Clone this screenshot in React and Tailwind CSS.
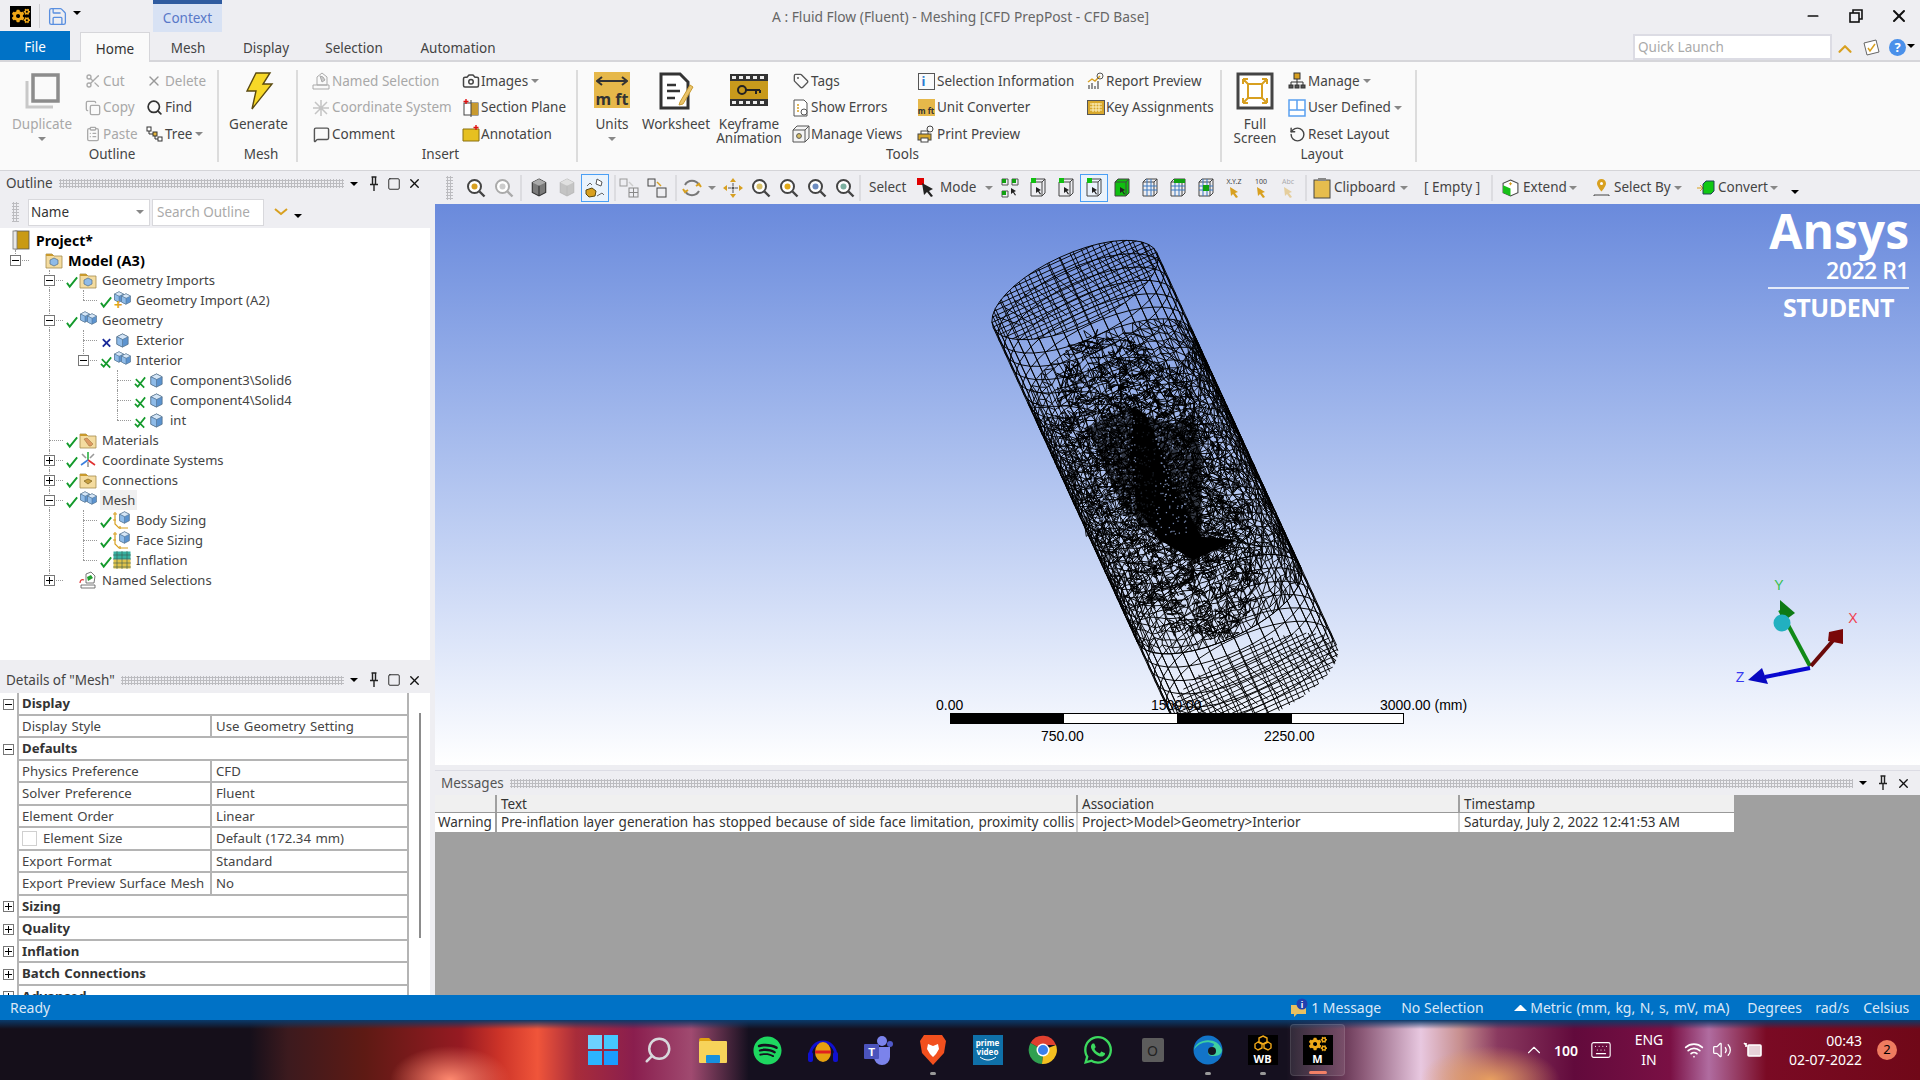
import React from 'react';
import { FaCogs, FaSpotify, FaWhatsapp } from 'react-icons/fa';
import { Scissors, X, Copy, Search, ClipboardList, MessageSquare, Camera, Tag, RotateCw, Volume2, Wifi, ChevronUp, Minus, Square, Keyboard, Save } from 'lucide-react';

/* ---------- mesh drawing ---------- */
function makeRandom(seed) {
  let s = seed;
  return () => {
    s = (s * 1664525 + 1013904223) % 4294967296;
    return s / 4294967296;
  };
}

const AX = 0.416, AY = 0.909, PX = 0.909, PY = -0.416;
const LEN = 432, RAD = 90, MINOR = 36;
function cyl(t, a, r = 1) {
  return [
    1075 - 435 + AX * LEN * t + PX * RAD * r * Math.cos(a) + AX * MINOR * r * Math.sin(a),
    290 - 204 + AY * LEN * t + PY * RAD * r * Math.cos(a) + AY * MINOR * r * Math.sin(a),
  ];
}
const fmt = (p) => `${p[0].toFixed(1)} ${p[1].toFixed(1)}`;

function buildMesh() {
  const rnd = makeRandom(7);
  let d = '';
  const seg = (a, b) => { d += `M${fmt(a)}L${fmt(b)}`; };
  const TWO = Math.PI * 2;

  // coarse ends of the tube
  const N = 40;
  [[0, 0.2], [0.8, 1]].forEach(([a, b]) => {
    for (let t = a; t <= b + 0.001; t += 0.034) {
      for (let i = 0; i < N; i++) seg(cyl(t, (i / N) * TWO), cyl(t, ((i + 1) / N) * TWO));
    }
    for (let i = 0; i < N; i++) seg(cyl(a, (i / N) * TWO), cyl(b, (i / N) * TWO));
  });

  // jittered triangles in the middle of the tube
  const M = 60, K = 34;
  const grid = [];
  for (let j = 0; j <= K; j++) {
    const row = [];
    for (let i = 0; i < M; i++) {
      const t = 0.2 + (0.6 * j) / K + (j > 0 && j < K ? (rnd() - 0.5) * 0.012 : 0);
      row.push(cyl(t, ((i + (rnd() - 0.5) * 0.5) / M) * TWO));
    }
    grid.push(row);
  }
  for (let j = 0; j <= K; j++) {
    for (let i = 0; i < M; i++) {
      seg(grid[j][i], grid[j][(i + 1) % M]);
      if (j < K) {
        seg(grid[j][i], grid[j + 1][i]);
        if (rnd() > 0.35) seg(grid[j][i], grid[j + 1][(i + 1) % M]);
      }
    }
  }

  // end caps
  [0, 1].forEach((t) => {
    for (let u = -0.92; u < 0.95; u += 0.13) {
      const w = Math.sqrt(1 - u * u);
      const c = (x, y) => [
        cyl(t, 0)[0] - PX * RAD + PX * RAD * x + AX * MINOR * y,
        cyl(t, 0)[1] - PY * RAD + PY * RAD * x + AY * MINOR * y,
      ];
      seg(c(u, -w), c(u, w));
      seg(c(-w, u), c(w, u));
      seg(c(u, -w * 0.6), c(Math.min(u + 0.2, Math.sqrt(1 - 0.36 * w * w)), w * 0.6));
    }
  });

  // refinement around the body in the middle, thinning out towards the tube wall
  for (let n = 0; n < 1800; n++) {
    const a = rnd() * TWO;
    const r = rnd();
    const cx = 722 + AX * 165 * r * Math.sin(a) + PX * 78 * r * Math.cos(a);
    const cy = 283 + AY * 165 * r * Math.sin(a) + PY * 78 * r * Math.cos(a);
    const size = 3 + r * 7;
    const p1 = [cx, cy];
    const p2 = [cx + (rnd() - 0.5) * size * 2, cy + (rnd() - 0.5) * size * 2];
    const p3 = [cx + (rnd() - 0.5) * size * 2, cy + (rnd() - 0.5) * size * 2];
    seg(p1, p2); seg(p2, p3); seg(p3, p1);
  }
  return d;
}

const BODY = [[380, 620], [520, 555], [560, 590], [640, 610], [700, 590], [725, 700], [725, 950], [830, 960], [700, 1020], [600, 960], [480, 850], [420, 720]]
  .map(([x, y]) => [960 + x / 3 - 435, 220 + y / 3 - 204]);
const CORE = [[520, 555], [560, 590], [610, 700], [640, 800], [725, 950], [830, 960], [700, 1020], [600, 960], [530, 860], [510, 700]]
  .map(([x, y]) => [960 + x / 3 - 435, 220 + y / 3 - 204]);

function makeSpecks() {
  const rnd = makeRandom(21);
  const out = [];
  for (let i = 0; i < 520; i++) {
    const x = 655 + rnd() * 100;
    const y = 200 + rnd() * 130;
    out.push([x, y]);
  }
  return out;
}

const MESH_PATH = buildMesh();
const SPECKS = makeSpecks();

function MeshDrawing() {
  return (
    <svg className="absolute inset-0" width="1485" height="561" viewBox="0 0 1485 561">
      <clipPath id="meshClip"><rect x="0" y="0" width="1485" height="509" /></clipPath>
      <g clipPath="url(#meshClip)">
        <path d={MESH_PATH} fill="none" stroke="#000" strokeWidth="0.95" />
        <polygon points={BODY.map((p) => p.join(',')).join(' ')} fill="#000" opacity="0.72" />
        <polygon points={CORE.map((p) => p.join(',')).join(' ')} fill="#000" />
        {SPECKS.map(([x, y], i) => (
          <rect key={i} x={x} y={y} width="1.3" height="1.3" fill="#9db3e4" opacity={x > 700 && x < 720 ? 0.15 : 0.75} />
        ))}
      </g>
    </svg>
  );
}

/* ---------- small bits ---------- */
function Caret({ dark }) {
  return <span className={`inline-block w-0 h-0 border-x-[4px] border-x-transparent border-t-[4px] ${dark ? 'border-t-black' : 'border-t-[#888]'}`} />;
}

function Grip({ className }) {
  return <div className={`h-[9px] bg-[radial-gradient(#bcbcc0_1px,transparent_1.1px)] bg-[length:3px_3px] ${className}`} />;
}

function Pin() {
  return (
    <svg width="10" height="16" viewBox="0 0 10 16" fill="none" stroke="#222" strokeWidth="1.4">
      <path d="M2.5 1h5M3.5 1v7M6.5 1v7M1 8.5h8M5 8.5V15" />
    </svg>
  );
}

function PanelButtons({ square = true }) {
  return (
    <div className="flex items-center">
      <span className="w-[20px] flex justify-center"><Caret dark /></span>
      <span className="w-[20px] flex justify-center"><Pin /></span>
      {square && <span className="w-[20px] flex justify-center"><Square size={14} color="#222" strokeWidth={1.6} /></span>}
      <span className="w-[20px] flex justify-center"><X size={15} color="#111" strokeWidth={2.2} /></span>
    </div>
  );
}

function ExpandBox({ open }) {
  return (
    <span className="relative z-10 w-[11px] h-[11px] border border-[#777] bg-white flex items-center justify-center shrink-0">
      <span className="absolute w-[7px] h-px bg-black" />
      {!open && <span className="absolute h-[7px] w-px bg-black" />}
    </span>
  );
}

/* ---------- tree icons ---------- */
function Cube({ size = 18, top = '#d5e6f7', left = '#8fbbe8', right = '#5c93cf' }) {
  return (
    <svg width={size} height={size} viewBox="0 0 16 16">
      <path d="M8 1l6 3v8l-6 3-6-3V4z" fill={right} stroke="#4f6b86" strokeWidth="0.8" />
      <path d="M8 1l6 3-6 3-6-3z" fill={top} stroke="#4f6b86" strokeWidth="0.6" />
      <path d="M2 4l6 3v8l-6-3z" fill={left} stroke="#4f6b86" strokeWidth="0.6" />
    </svg>
  );
}

function Cubes({ plus }) {
  return (
    <span className="relative w-[18px] h-[18px] block">
      <span className="absolute left-0 top-0"><Cube size={12} /></span>
      <span className="absolute left-[7px] top-[2px]"><Cube size={12} /></span>
      {plus && <span className="absolute left-[1px] top-[8px] text-[#e2a51c] font-bold text-[15px] leading-[10px]">+</span>}
    </span>
  );
}

function Folder({ kind }) {
  return (
    <svg width="18" height="18" viewBox="0 0 18 18">
      <path d="M1 3h6l2 2h8v12H1z" fill="#f4dca0" stroke="#a58a4c" strokeWidth="0.8" />
      <path d="M1 3h6l2 2H1z" fill="#c99a2e" />
      {kind === 'cube' && <path d="M9 7l4 2v4l-4 2-4-2V9z" fill="#8fbbe8" stroke="#4f6b86" strokeWidth="0.7" />}
      {kind === 'mat' && <path d="M5 8l3-1 6 6-2 2h-2z" fill="#dc9a63" stroke="#9a6a3a" strokeWidth="0.5" />}
      {kind === 'con' && <path d="M5 10l4-2 4 2-4 3z" fill="#c8a040" stroke="#7a6020" strokeWidth="0.7" />}
    </svg>
  );
}

function ModelBook() {
  return (
    <svg width="18" height="20" viewBox="0 0 18 20">
      <rect x="3" y="1" width="14" height="18" fill="#c99a14" stroke="#555" strokeWidth="0.8" />
      <rect x="1" y="1" width="4" height="18" fill="#e8e8e8" stroke="#777" strokeWidth="0.8" />
    </svg>
  );
}

function CoordIcon() {
  return (
    <svg width="18" height="18" viewBox="0 0 18 18" strokeWidth="1.6" fill="none">
      <path d="M9 9V1" stroke="#28b040" />
      <path d="M9 9l7 5" stroke="#e03030" />
      <path d="M9 9l-7 5" stroke="#3a80e0" />
      <path d="M3 3l4 4M15 3l-4 4M9 11v5" stroke="#999" />
    </svg>
  );
}

function NamedIcon() {
  return (
    <svg width="18" height="18" viewBox="0 0 18 18">
      <path d="M2 14h14v3H2z" fill="#fff" stroke="#555" strokeWidth="0.8" />
      <path d="M7 3l5-2 4 4-1 7H7z" fill="#fff" stroke="#555" strokeWidth="0.8" />
      <path d="M8 6l4-2 2 3-5 3z" fill="#22a030" />
      <path d="M1 12c0-3 2-4 4-3" fill="none" stroke="#e03030" strokeWidth="1.2" />
    </svg>
  );
}

function SizingIcon() {
  return (
    <span className="relative w-[18px] h-[18px] block">
      <svg className="absolute" width="18" height="18" viewBox="0 0 18 18" fill="none" stroke="#d8a020" strokeWidth="1.2">
        <path d="M2 1v12l4 4h9" />
        <path d="M0 3h4M0 9h3M7 15v3" />
      </svg>
      <span className="absolute left-[5px] top-0"><Cube size={13} /></span>
    </span>
  );
}

function InflationIcon() {
  return (
    <svg width="18" height="18" viewBox="0 0 18 18">
      <rect x="0.5" y="0.5" width="17" height="8" fill="#38b0a0" />
      <rect x="0.5" y="8.5" width="17" height="9" fill="#dfc24a" />
      <path d="M0 4h18M0 8h18M0 12h18M0 16h18M4 0v18M9 0v18M14 0v18" stroke="#3a5a50" strokeWidth="0.6" />
    </svg>
  );
}

function CheckMark({ kind }) {
  if (!kind) return null;
  return (
    <svg width="14" height="14" viewBox="0 0 14 14" fill="none">
      {kind === 'ok' && <path d="M1 8l3 4 8-10" stroke="#149a2c" strokeWidth="2" />}
      {kind === 'okx' && <path d="M2 4l9 9M1 9l3 3 8-10" stroke="#149a2c" strokeWidth="1.8" />}
      {kind === 'x' && <path d="M3 4l8 8M11 4l-8 8" stroke="#1a2a9a" strokeWidth="2" />}
    </svg>
  );
}

const LEVELS = ['pl-[10px]', 'pl-[44px]', 'pl-[78px]', 'pl-[112px]'];
const GUIDES = { 49: 'left-[49px]', 83: 'left-[83px]', 117: 'left-[117px]', 15: 'left-[15px]' };

const TREE = [
  { label: 'Geometry Imports', level: 1, box: 'open', check: 'ok', icon: <Folder kind="cube" />, guides: [[49, 1]] },
  { label: 'Geometry Import (A2)', level: 2, check: 'ok', icon: <Cubes plus />, guides: [[49, 1], [83, 0]] },
  { label: 'Geometry', level: 1, box: 'open', check: 'ok', icon: <Cubes />, guides: [[49, 1]] },
  { label: 'Exterior', level: 2, check: 'x', icon: <Cube size={15} />, guides: [[49, 1], [83, 1]] },
  { label: 'Interior', level: 2, box: 'open', check: 'okx', icon: <Cubes />, guides: [[49, 1], [83, 0]] },
  { label: 'Component3\\Solid6', level: 3, check: 'okx', icon: <Cube size={15} />, guides: [[49, 1], [117, 1]] },
  { label: 'Component4\\Solid4', level: 3, check: 'okx', icon: <Cube size={15} />, guides: [[49, 1], [117, 1]] },
  { label: 'int', level: 3, check: 'okx', icon: <Cube size={15} />, guides: [[49, 1], [117, 0]] },
  { label: 'Materials', level: 1, check: 'ok', icon: <Folder kind="mat" />, guides: [[49, 1]] },
  { label: 'Coordinate Systems', level: 1, box: 'closed', check: 'ok', icon: <CoordIcon />, guides: [[49, 1]] },
  { label: 'Connections', level: 1, box: 'closed', check: 'ok', icon: <Folder kind="con" />, guides: [[49, 1]] },
  { label: 'Mesh', level: 1, box: 'open', check: 'ok', icon: <Cubes />, guides: [[49, 1]], active: true },
  { label: 'Body Sizing', level: 2, check: 'ok', icon: <SizingIcon />, guides: [[49, 1], [83, 1]] },
  { label: 'Face Sizing', level: 2, check: 'ok', icon: <SizingIcon />, guides: [[49, 1], [83, 1]] },
  { label: 'Inflation', level: 2, check: 'ok', icon: <InflationIcon />, guides: [[49, 1], [83, 0]] },
  { label: 'Named Selections', level: 1, box: 'closed', icon: <NamedIcon />, guides: [[49, 0]] },
];

function TreeRow({ row }) {
  return (
    <div className={`relative h-5 flex items-center ${LEVELS[row.level]}`}>
      {row.guides?.map(([x, full]) => (
        <span key={x} className={`absolute top-0 border-l border-dotted border-[#999] ${GUIDES[x]} ${full ? 'bottom-0' : 'h-[10px]'}`} />
      ))}
      <div className="relative w-[22px] h-full flex items-center shrink-0">
        <span className="absolute left-[5px] right-[3px] border-t border-dotted border-[#999]" />
        {row.box ? <ExpandBox open={row.box === 'open'} /> : null}
      </div>
      <div className="w-[13px] h-full flex items-end pb-[1px] shrink-0"><CheckMark kind={row.check} /></div>
      <div className="w-[18px] flex justify-center shrink-0">{row.icon}</div>
      <span className={`ml-[3px] px-[2px] leading-5 whitespace-nowrap ${row.active ? 'bg-[#f0f0f0]' : ''} ${row.bold ? 'font-bold text-black text-[14.5px]' : 'text-[13px]'}`}>{row.label}</span>
    </div>
  );
}

/* ---------- details ---------- */
const DETAILS = [
  { section: 'Display', open: true },
  { a: 'Display Style', b: 'Use Geometry Setting' },
  { section: 'Defaults', open: true },
  { a: 'Physics Preference', b: 'CFD' },
  { a: 'Solver Preference', b: 'Fluent' },
  { a: 'Element Order', b: 'Linear' },
  { a: 'Element Size', b: 'Default (172.34 mm)', check: true },
  { a: 'Export Format', b: 'Standard' },
  { a: 'Export Preview Surface Mesh', b: 'No' },
  { section: 'Sizing' },
  { section: 'Quality' },
  { section: 'Inflation' },
  { section: 'Batch Connections' },
  { section: 'Advanced' },
];

function DetailRow({ row }) {
  return (
    <div className="flex h-[22.5px] shrink-0">
      <div className="w-[17px] flex items-center justify-center shrink-0">
        {row.section && <ExpandBox open={row.open} />}
      </div>
      <div className="w-[392px] flex border-x-2 border-b-2 border-[#b4b4b4] leading-[20px] text-[13.2px] [word-spacing:1px]">
        {row.section ? (
          <span className="pl-[3px] font-bold text-[#333]">{row.section}</span>
        ) : (
          <>
            <span className="w-[193px] pl-[3px] border-r-2 border-[#b4b4b4] whitespace-nowrap flex items-center shrink-0">
              {row.check && <span className="w-[15px] h-[15px] border border-[#d0d0d0] mr-[6px]" />}
              {row.a}
            </span>
            <span className="pl-[4px] whitespace-nowrap">{row.b}</span>
          </>
        )}
      </div>
    </div>
  );
}

/* ---------- ribbon icons ---------- */
function DuplicateIcon() {
  return (
    <svg width="38" height="38" viewBox="0 0 38 38" fill="none">
      <path d="M4 9v26h26" stroke="#c8c8c8" strokeWidth="3" />
      <rect x="10" y="3" width="25" height="26" stroke="#8c8c8c" strokeWidth="3.5" fill="#fafafa" />
    </svg>
  );
}
function BoltIcon() {
  return (
    <svg width="30" height="38" viewBox="0 0 30 38">
      <path d="M12 1h14l-7 11h9L8 37l4-18H3z" fill="#f7d827" stroke="#5a4a10" strokeWidth="1.4" />
    </svg>
  );
}
function UnitsIcon() {
  return (
    <span className="relative w-[36px] h-[36px] bg-[#e6b84a] block text-center text-[#333] font-bold text-[16px] leading-[16px] pt-[19px]">
      <svg className="absolute top-[3px] left-[2px]" width="32" height="12" viewBox="0 0 32 12" fill="none" stroke="#333" strokeWidth="2">
        <path d="M1 6h30M6 2L1 6l5 4M26 2l5 4-5 4" />
      </svg>
      m ft
    </span>
  );
}
function WorksheetIcon() {
  return (
    <svg width="36" height="38" viewBox="0 0 36 38" fill="none">
      <path d="M3 2h19l8 8v26H3z" fill="#fff" stroke="#333" strokeWidth="3" />
      <path d="M9 13h9M9 19h13M9 26h8" stroke="#333" strokeWidth="2.4" />
      <path d="M22 30l10-17 3 2-10 17-4 1z" fill="#e9c36a" stroke="#c89a30" strokeWidth="1" />
    </svg>
  );
}
function KeyframeIcon() {
  return (
    <svg width="38" height="36" viewBox="0 0 38 36">
      <rect x="0" y="2" width="38" height="32" fill="#333" />
      <rect x="0" y="9" width="38" height="18" fill="#c89a1c" />
      {[2, 9, 16, 23, 30].map((x) => (
        <g key={x}>
          <rect x={x} y="4" width="4" height="3" fill="#eee" />
          <rect x={x} y="29" width="4" height="3" fill="#eee" />
        </g>
      ))}
      <circle cx="12" cy="18" r="4" fill="none" stroke="#222" strokeWidth="2" />
      <path d="M16 18h14M26 18v4M30 18v3" stroke="#222" strokeWidth="2" fill="none" />
    </svg>
  );
}
function FullScreenIcon() {
  return (
    <svg width="38" height="38" viewBox="0 0 38 38" fill="none">
      <rect x="2" y="2" width="34" height="34" stroke="#444" strokeWidth="3" fill="#fff" />
      <rect x="12" y="12" width="14" height="14" stroke="#d8a020" strokeWidth="2" />
      <path d="M12 12L7 7M26 12l5-5M12 26l-5 5M26 26l5 5M7 7h5M7 7v5M31 7h-5M31 7v5M7 31h5M7 31v-5M31 31h-5M31 31v-5" stroke="#d8a020" strokeWidth="2" />
    </svg>
  );
}
function TreeIcon() {
  return (
    <svg width="17" height="16" viewBox="0 0 17 16" fill="none" stroke="#333">
      <rect x="1" y="1" width="4" height="4" fill="#fff" />
      <rect x="7" y="6" width="4" height="4" fill="#e2b23a" />
      <rect x="12" y="11" width="4" height="4" fill="#fff" />
      <path d="M3 5v3h4M9 10v3h3" />
    </svg>
  );
}
function NamedSelIcon() {
  return (
    <svg width="18" height="18" viewBox="0 0 18 18" fill="none" stroke="#aaa">
      <path d="M1 13h16v4H1zM5 13V5l5-4 5 4v8z" />
      <path d="M8 4l3 1 2 3-3 2z" fill="#ccc" />
    </svg>
  );
}
function CoordSysDim() {
  return (
    <svg width="18" height="18" viewBox="0 0 18 18" fill="none" stroke="#c4c4c4" strokeWidth="1.5">
      <path d="M9 1v16M1 9h16M3 3l12 12M15 3L3 15" />
    </svg>
  );
}
function SectionIcon() {
  return (
    <svg width="18" height="18" viewBox="0 0 18 18">
      <rect x="2" y="4" width="14" height="12" fill="#fff" stroke="#444" />
      <path d="M9 4h7v12H9z" fill="#c89a30" />
      <path d="M9 1v17" stroke="#444" />
      <path d="M4 0v5M1.5 2.5h5" stroke="#e01010" strokeWidth="1.4" />
    </svg>
  );
}
function AnnotationIcon() {
  return (
    <svg width="18" height="18" viewBox="0 0 18 18">
      <path d="M1 4h16v12H1z" fill="#e6c020" stroke="#8a7010" />
      <path d="M14 0v5M11.5 2.5h5" stroke="#e01010" strokeWidth="1.4" />
    </svg>
  );
}
function ErrorsIcon() {
  return (
    <svg width="18" height="18" viewBox="0 0 18 18" fill="none">
      <path d="M2 1h10l3 3v13H2z" stroke="#555" fill="#fff" />
      <path d="M5 6h2M5 9h2M5 12h2" stroke="#d8a020" strokeWidth="1.5" />
      <circle cx="12" cy="13" r="3" stroke="#555" fill="#fff" />
    </svg>
  );
}
function ViewsIcon() {
  return (
    <svg width="18" height="18" viewBox="0 0 18 18" fill="none" stroke="#555">
      <path d="M1 5h12v12H1zM1 5l4-4h12v12l-4 4M13 5l4-4" fill="#f4f4f4" />
      <circle cx="7" cy="11" r="2.4" fill="#d8c068" />
    </svg>
  );
}
function InfoIcon() {
  return (
    <span className="w-[17px] h-[17px] border border-[#555] flex items-center justify-center text-[#2a7ad0] font-bold text-[13px] leading-none pr-[5px]">i</span>
  );
}
function MiniUnits() {
  return <span className="w-[17px] h-[17px] bg-[#e6b84a] block text-[8px] font-bold leading-[24px] text-center text-[#333]">m ft</span>;
}
function PrintIcon() {
  return (
    <svg width="18" height="18" viewBox="0 0 18 18" stroke="#444" fill="none">
      <rect x="4" y="6" width="7" height="4" fill="#fff" />
      <rect x="1" y="9" width="13" height="6" fill="#d8a82c" />
      <rect x="4" y="13" width="7" height="4" fill="#fff" />
      <circle cx="13" cy="4" r="3" />
    </svg>
  );
}
function ReportIcon() {
  return (
    <svg width="18" height="18" viewBox="0 0 18 18" fill="none">
      <path d="M2 17v-4M5 17v-6M8 17v-3M11 17V9" stroke="#666" strokeWidth="1.4" />
      <path d="M1 10l4-3 3 2 5-5" stroke="#d8a020" strokeWidth="1.4" />
      <circle cx="13" cy="4" r="3" stroke="#555" />
    </svg>
  );
}
function KeyAssignIcon() {
  return (
    <svg width="18" height="15" viewBox="0 0 18 15">
      <rect x="0.5" y="0.5" width="17" height="14" fill="#d8a82c" stroke="#555" />
      <path d="M3 4h12M3 7h12M3 10h12M6 3v9M9 3v9M12 3v9" stroke="#fff2c0" />
    </svg>
  );
}
function ManageIcon() {
  return (
    <svg width="18" height="18" viewBox="0 0 18 18" fill="none" stroke="#333">
      <rect x="6" y="1" width="6" height="6" fill="#d8a020" />
      <path d="M9 7v3M3 13v-3h12v3M9 10v3" />
      <rect x="1" y="13" width="4" height="3" fill="#555" />
      <rect x="7" y="13" width="4" height="3" fill="#555" />
      <rect x="13" y="13" width="4" height="3" fill="#555" />
    </svg>
  );
}
function LayoutIcon() {
  return (
    <svg width="18" height="18" viewBox="0 0 18 18" fill="none" stroke="#5aa0f0" strokeWidth="1.5">
      <rect x="1" y="1" width="16" height="16" fill="#fff" />
      <path d="M9 1v10M1 11h16" />
    </svg>
  );
}

function SmallItem({ icon, label, dim, caret, width, textGap = 'ml-[1px]' }) {
  return (
    <div className={`h-[22px] flex items-center whitespace-nowrap ${width || ''} ${dim ? 'text-[#a8a8a8]' : ''}`}>
      <span className="w-[18px] flex justify-center shrink-0">{icon}</span>
      <span className={textGap}>{label}</span>
      {caret && <span className="ml-[3px] flex"><Caret /></span>}
    </div>
  );
}

function SmallCol({ className, children }) {
  return <div className={`flex flex-col gap-[4.5px] shrink-0 ${className}`}>{children}</div>;
}

function LargeItem({ icon, lines, dim, caret, className }) {
  return (
    <div className={`flex flex-col items-center shrink-0 leading-[14px] ${dim ? 'text-[#a8a8a8]' : ''} ${className}`}>
      <div className="h-[47px] pt-[2px] flex justify-center">{icon}</div>
      {lines.map((l) => <span key={l} className="whitespace-nowrap">{l}</span>)}
      {caret && <span className="mt-[6px] flex"><Caret /></span>}
    </div>
  );
}

function RibbonGroup({ label, width, children }) {
  return (
    <div className={`flex flex-col h-[92px] mt-[8px] shrink-0 border-r-2 border-[#dcdcdc] ${width}`}>
      <div className="h-[76px] flex">{children}</div>
      <div className="text-center leading-[16px] pl-[7px]">{label}</div>
    </div>
  );
}

/* ---------- graphics toolbar icons ---------- */
function Magnifier({ fill = '#d8a020', dim }) {
  const c = dim ? '#aaa' : '#444';
  return (
    <svg width="20" height="20" viewBox="0 0 20 20" fill="none">
      <circle cx="8.5" cy="8.5" r="6.5" stroke={c} strokeWidth="2" fill="#fff" />
      <path d="M13.5 13.5l5 5" stroke={c} strokeWidth="2.4" />
      <circle cx="8.5" cy="8.5" r="3" fill={dim ? '#ccc' : fill} />
    </svg>
  );
}
function ToolCube({ dark }) {
  return (
    <svg width="18" height="19" viewBox="0 0 16 17">
      <path d="M8 1l6 3v9l-6 3-6-3V4z" fill={dark ? '#7a7a7a' : '#c4c4c4'} stroke={dark ? '#333' : '#bbb'} />
      <path d="M8 1l6 3-6 3-6-3z" fill={dark ? '#aaa' : '#e0e0e0'} />
      <path d="M8 7v9" stroke={dark ? '#333' : '#bbb'} />
    </svg>
  );
}
function Swap() {
  return (
    <svg width="22" height="22" viewBox="0 0 22 22" fill="none">
      <path d="M3 9l3-3 2 2M13 19l5-3 2 2" stroke="#666" />
      <path d="M13 2l5 3-1 4-5-2z" fill="#fff" stroke="#555" />
      <path d="M2 13l6-2 4 3-1 5-6 1-3-3z" fill="#d8a020" stroke="#5a4a10" />
    </svg>
  );
}
function ViewBoxes({ hue, grid }) {
  return (
    <svg width="20" height="20" viewBox="0 0 20 20" fill="none">
      <rect x="1" y="1" width="7" height="7" stroke={hue ? '#444' : '#999'} />
      <path d="M10 4l4 4" stroke={hue ? '#d8a020' : '#ccc'} strokeWidth="1.5" />
      <rect x="10" y="10" width="9" height="9" stroke={hue ? '#444' : '#888'} />
      {grid && <path d="M14.5 10v9M10 14.5h9" stroke="#888" />}
    </svg>
  );
}
function Orbit() {
  return (
    <svg width="22" height="22" viewBox="0 0 22 22" fill="none" strokeWidth="2">
      <path d="M4 8a8 8 0 0 1 14 0" stroke="#777" />
      <path d="M18 14a8 8 0 0 1-14 0" stroke="#777" />
      <path d="M2 12l2 3 3-2" stroke="#d8a020" />
      <path d="M20 10l-2-3-3 2" stroke="#d8a020" />
    </svg>
  );
}
function PanIcon() {
  return (
    <svg width="20" height="20" viewBox="0 0 20 20">
      <path d="M10 0l3 4h-6zM10 20l-3-4h6zM0 10l4-3v6zM20 10l-4 3V7z" fill="#d8a020" />
      <circle cx="10" cy="10" r="1.5" fill="#555" />
      <path d="M10 5v3M10 12v3M5 10h3M12 10h3" stroke="#555" />
    </svg>
  );
}
function PickBox({ fill = 'none', corner, grid, glyph }) {
  return (
    <svg width="20" height="22" viewBox="0 0 20 22" fill="none">
      <path d="M3 5h11v14H3zM3 5l3-3h11v14l-3 3M14 5l3-3" stroke="#444" fill={fill} />
      {corner && <path d="M3 1h5v5H3z" fill="#10c010" />}
      {grid && <path d="M7 2v17M11 2v17M3 9h14M3 13h14" stroke="#3a78c0" />}
      {grid === 'top' && <path d="M6 2h11v4H6z" fill="#10a010" />}
      {grid === 'mid' && <rect x="7" y="8" width="6" height="6" fill="#10a010" />}
      {glyph && <path d="M8 10l5 3-2 1 2 3-1 .5-2-3-2 1.5z" fill="#222" />}
    </svg>
  );
}
function VertexIcon() {
  return (
    <svg width="20" height="22" viewBox="0 0 20 22">
      <path d="M2 2h6v6H2zM12 2h6v6h-6zM2 14h6v6H2z" fill="none" stroke="#555" />
      <path d="M2 2h4v4H2zM12 2h4v4h-4zM2 14h4v4H2z" fill="#10a010" />
      <path d="M11 11l5 3-2 1 2 3-1 .5-2-3-2 1.5z" fill="#222" />
    </svg>
  );
}
function CursorPlain({ dim, label }) {
  return (
    <span className={`relative block w-[20px] h-[22px] ${dim ? 'opacity-40' : ''}`}>
      <span className="absolute top-0 left-0 w-full text-center text-[7px] leading-[10px] whitespace-nowrap">{label}</span>
      <svg className="absolute left-[5px] top-[9px]" width="11" height="13" viewBox="0 0 11 13">
        <path d="M1 1l8 5-3 1 3 4-2 1-3-4-2 2z" fill="#d8a020" />
      </svg>
    </span>
  );
}

function Slot({ children, active, className }) {
  return (
    <div className={`w-[28px] h-[28px] flex items-center justify-center shrink-0 ${active ? 'border border-[#4a9ff5] bg-[#eaf3fc]' : ''} ${className || ''}`}>
      {children}
    </div>
  );
}

function ToolSep({ className }) {
  return <div className={`w-[2px] h-[26px] bg-[#dcdce0] shrink-0 ${className || ''}`} />;
}

function GraphicsToolbar() {
  return (
    <div className="h-[33px] flex items-center pl-[7px] bg-[#eeeef2] shrink-0">
      <div className="w-[7px] h-[24px] ml-[4px] mr-[9px] bg-[radial-gradient(#bcbcc0_1px,transparent_1.1px)] bg-[length:3px_3px] shrink-0" />
      <Slot><Magnifier /></Slot>
      <Slot><Magnifier dim /></Slot>
      <ToolSep className="ml-[2px] mr-[3px]" />
      <Slot><ToolCube dark /></Slot>
      <Slot><ToolCube /></Slot>
      <Slot active><Swap /></Slot>
      <ToolSep className="ml-[5px]" />
      <Slot className="ml-[-1px]"><ViewBoxes grid /></Slot>
      <Slot><ViewBoxes hue /></Slot>
      <ToolSep className="ml-[4px]" />
      <Slot className="ml-[1px]"><Orbit /></Slot>
      <span className="w-[12px] flex justify-center shrink-0"><Caret /></span>
      <Slot className="ml-[1px]"><PanIcon /></Slot>
      <Slot><Magnifier fill="#d8c068" /></Slot>
      <Slot><Magnifier fill="#e0a818" /></Slot>
      <Slot><Magnifier fill="#6c8cc0" /></Slot>
      <Slot><Magnifier fill="#7cb0a0" /></Slot>
      <ToolSep />
      <span className="ml-[8px] w-[48px] shrink-0">Select</span>
      <span className="w-[20px] shrink-0">
        <svg width="20" height="20" viewBox="0 0 20 20">
          <rect x="0" y="0" width="7" height="7" fill="#e00000" />
          <path d="M5 5l11 6-4 2 4 5-2 1-4-5-3 3z" fill="#222" />
        </svg>
      </span>
      <span className="ml-[3px] w-[45px] shrink-0">Mode</span>
      <span className="w-[11px] shrink-0 flex"><Caret /></span>
      <Slot><VertexIcon /></Slot>
      <Slot><PickBox corner glyph /></Slot>
      <Slot><PickBox corner glyph /></Slot>
      <Slot active><PickBox corner glyph /></Slot>
      <Slot><PickBox fill="#10c010" glyph /></Slot>
      <Slot><PickBox grid /></Slot>
      <Slot><PickBox grid="top" /></Slot>
      <Slot><PickBox grid="mid" /></Slot>
      <Slot><CursorPlain label="X.Y.Z" /></Slot>
      <Slot className="ml-[-1px]"><CursorPlain label="100" /></Slot>
      <Slot className="ml-[-1px]"><CursorPlain dim label="Abc" /></Slot>
      <ToolSep className="ml-[3px]" />
      <span className="ml-[6px] w-[20px] shrink-0">
        <svg width="18" height="22" viewBox="0 0 18 22">
          <rect x="1" y="3" width="16" height="18" fill="#e6bd4e" stroke="#444" />
          <rect x="5" y="1" width="8" height="3" fill="#888" />
        </svg>
      </span>
      <span className="ml-[1px] w-[66px] shrink-0">Clipboard</span>
      <span className="w-[24px] shrink-0 flex"><Caret /></span>
      <span className="w-[67px] shrink-0">[ Empty ]</span>
      <ToolSep />
      <span className="ml-[9px] w-[21px] shrink-0">
        <svg width="17" height="18" viewBox="0 0 16 17">
          <path d="M8 1l7 3v9l-7 3-7-3V4z" fill="#fff" stroke="#444" />
          <path d="M1 6l7 3v7l-7-3z" fill="#18c018" />
          <path d="M8 3v3M6.5 4.5h3" stroke="#d8a020" />
        </svg>
      </span>
      <span className="w-[46px] shrink-0">Extend</span>
      <span className="w-[24px] shrink-0 flex"><Caret /></span>
      <span className="w-[21px] shrink-0">
        <svg width="17" height="20" viewBox="0 0 17 20" fill="none">
          <path d="M8.5 1a4.5 4.5 0 0 1 4.5 4.500c0 3-4.500 8-4.500 8S4 8.500 4 5.500A4.500 4.500 0 0 1 8.500 1z" fill="#d8a020" />
          <circle cx="8.500" cy="5.500" r="1.500" fill="#fff" />
          <path d="M1 18v-1h15v1" stroke="#444" />
        </svg>
      </span>
      <span className="w-[60px] shrink-0">Select By</span>
      <span className="w-[23px] shrink-0 flex"><Caret /></span>
      <span className="w-[21px] shrink-0">
        <svg width="18" height="16" viewBox="0 0 18 16">
          <path d="M0 8h5M3 5l3 3-3 3" stroke="#d8a020" fill="none" />
          <path d="M6 4l3-3h8v10l-3 3H6z" fill="#12c812" stroke="#245" />
        </svg>
      </span>
      <span className="w-[52px] shrink-0">Convert</span>
      <span className="w-[20px] shrink-0 flex"><Caret /></span>
      <span className="ml-[1px] mt-[8px] shrink-0 flex"><Caret dark /></span>
    </div>
  );
}

/* ---------- viewport ---------- */
function ScaleLabel({ className, children }) {
  return <span className={`absolute font-['Liberation_Sans',sans-serif] text-[14px] leading-none text-black ${className}`}>{children}</span>;
}

function Triad() {
  return (
    <svg className="absolute left-[1265px] top-[356px]" width="180" height="140" viewBox="0 0 180 140">
      <path d="M110 106L80 50" stroke="#118a18" strokeWidth="4" />
      <path d="M80 40l0 24 15-11z" fill="#0d7a14" />
      <circle cx="82" cy="63" r="8.500" fill="#22b0c0" />
      <path d="M111 106l26-30" stroke="#6a0a0a" strokeWidth="4" />
      <path d="M143 69l-14 3-1 9 15 3z" fill="#7a0808" />
      <path d="M110 108l-45 9" stroke="#0808d0" strokeWidth="4" />
      <path d="M48 120l14-12 6 16z" fill="#0808c0" />
      <text x="79" y="30" fill="#38c050" fontSize="14" textAnchor="middle" fontFamily="Liberation Sans">Y</text>
      <text x="153" y="63" fill="#f04050" fontSize="14" textAnchor="middle" fontFamily="Liberation Sans">X</text>
      <text x="40" y="122" fill="#3838f0" fontSize="14" textAnchor="middle" fontFamily="Liberation Sans">Z</text>
    </svg>
  );
}

function Viewport() {
  return (
    <div className="relative h-[561px] shrink-0 overflow-hidden bg-gradient-to-b from-[#6a8adc] to-white">
      <ScaleLabel className="left-[501px] top-[494px]">0.00</ScaleLabel>
      <ScaleLabel className="left-[716px] top-[494px]">1500.00</ScaleLabel>
      <ScaleLabel className="left-[945px] top-[494px]">3000.00 (mm)</ScaleLabel>
      <MeshDrawing />
      <div className="absolute left-[515px] top-[509px] w-[454px] h-[11px] flex border border-black bg-white">
        <span className="w-[113px] bg-black" />
        <span className="w-[113px]" />
        <span className="w-[115px] bg-black" />
      </div>
      <ScaleLabel className="left-[606px] top-[525px]">750.00</ScaleLabel>
      <ScaleLabel className="left-[829px] top-[525px]">2250.00</ScaleLabel>
      <Triad />
      <div className="absolute right-[11px] top-[2px] flex flex-col items-end text-white font-['Open_Sans',sans-serif] font-bold">
        <span className="text-[48px] leading-[50px]">Ansys</span>
        <span className="text-[23px] leading-[24px] mt-[2px] font-semibold tracking-[-0.5px]">2022 R1</span>
        <span className="w-[141px] h-[2px] bg-white/80 mt-[5px]" />
        <span className="w-[141px] text-center text-[25px] leading-[30px] mt-[3px] font-bold tracking-[-0.5px]">STUDENT</span>
      </div>
    </div>
  );
}

/* ---------- taskbar ---------- */
function WindowsLogo() {
  return (
    <span className="grid grid-cols-2 gap-[2px] w-[30px] h-[30px]">
      <span className="bg-[#6cd2ff]" /><span className="bg-[#45c8ff]" />
      <span className="bg-[#2cb4ff]" /><span className="bg-[#1a9cff]" />
    </span>
  );
}
function TeamsIcon() {
  return (
    <svg width="32" height="32" viewBox="0 0 32 32">
      <circle cx="20" cy="7" r="5" fill="#7b83eb" />
      <circle cx="28" cy="10" r="3" fill="#5059c9" />
      <path d="M12 13h16v10a7 7 0 0 1-16 0z" fill="#7b83eb" />
      <rect x="2" y="10" width="15" height="15" rx="1" fill="#4b53bc" />
      <text x="9.500" y="22" fill="#fff" fontSize="11" fontWeight="bold" textAnchor="middle" fontFamily="Liberation Sans">T</text>
    </svg>
  );
}
function AudacityIcon() {
  return (
    <svg width="32" height="32" viewBox="0 0 32 32" fill="none">
      <path d="M3 23C3 3 29 3 29 23" stroke="#1010d0" strokeWidth="3" />
      <rect x="1" y="18" width="5" height="10" rx="2" fill="#1010d0" />
      <rect x="26" y="18" width="5" height="10" rx="2" fill="#1010d0" />
      <ellipse cx="16" cy="18" rx="8" ry="10" fill="#e6a010" />
      <path d="M8 18h16" stroke="#e02020" strokeWidth="3" />
    </svg>
  );
}
function BraveIcon() {
  return (
    <svg width="28" height="32" viewBox="0 0 28 32">
      <path d="M5 1h18l4 6-2 12-11 12L3 19 1 7z" fill="#f2501e" />
      <path d="M9 10l5 2 5-2 1 5-3 5-3 3-3-3-3-5z" fill="#fff" />
    </svg>
  );
}
function PrimeIcon() {
  return (
    <span className="w-[30px] h-[30px] bg-[#0f70a8] flex flex-col items-center text-white text-[8px] leading-[9px] font-bold pt-[3px]">
      <span>prime</span>
      <span>video</span>
      <svg width="18" height="6" viewBox="0 0 18 6" fill="none"><path d="M1 1c5 4 11 4 16 0" stroke="#fff" /></svg>
    </span>
  );
}
function ChromeIcon() {
  return (
    <svg width="30" height="30" viewBox="0 0 30 30">
      <path d="M15 15L2.500 8A14 14 0 0 1 28 10H15z" fill="#e0402f" />
      <path d="M15 15L28 10a14 14 0 0 1-14 19z" fill="#f4c020" />
      <path d="M15 15L14 29A14 14 0 0 1 2.500 8z" fill="#30a050" />
      <circle cx="15" cy="15" r="6.500" fill="#fff" />
      <circle cx="15" cy="15" r="5" fill="#3a80ec" />
    </svg>
  );
}
function EdgeIcon() {
  return (
    <svg width="30" height="30" viewBox="0 0 30 30">
      <circle cx="15" cy="15" r="14.500" fill="#1274c8" />
      <path d="M1 15C3 3 25 1 29 15c0 5-5 6-9 6-3 0-5-1-5-4 0-5 6-4 6-8C14 5 5 8 1 15z" fill="#3fd0a0" />
      <circle cx="19" cy="16" r="4" fill="#14161f" />
    </svg>
  );
}
function WbIcon() {
  return (
    <span className="w-[30px] h-[30px] bg-black flex flex-col items-center text-white text-[11px] leading-[12px] font-bold">
      <svg width="20" height="18" viewBox="0 0 20 18" fill="none" stroke="#f0a818" strokeWidth="1.4">
        <path d="M10 1l4 2v4l-4 2-4-2V3zM5 7l4 2v4l-4 2-3-2V9zM15 7l3 2v4l-3 2-4-2V9z" />
      </svg>
      WB
    </span>
  );
}
function MechIcon() {
  return (
    <span className="w-[30px] h-[30px] bg-black flex flex-col items-center text-white text-[11px] leading-[12px] font-bold">
      <FaCogs size={18} color="#f0a818" />
      M
    </span>
  );
}
function FolderIcon() {
  return (
    <svg width="30" height="30" viewBox="0 0 30 30">
      <path d="M1 5a2 2 0 0 1 2-2h8l3 3h-13z" fill="#e0a010" />
      <rect x="1" y="6" width="28" height="22" rx="1" fill="#f7d35a" />
      <rect x="8" y="20" width="14" height="8" rx="1" fill="#1590e0" />
    </svg>
  );
}
function GreyApp() {
  return <span className="w-[22px] h-[24px] rounded-[2px] bg-[#5c5c5c] flex items-center justify-center text-[#222] text-[14px]">O</span>;
}

const DOCK = [
  { icon: <WindowsLogo /> },
  { icon: <Search size={30} color="#d8d8dc" strokeWidth={2} className="-scale-x-100" /> },
  { icon: <FolderIcon /> },
  { icon: <FaSpotify size={29} color="#1ed760" /> },
  { icon: <AudacityIcon /> },
  { icon: <TeamsIcon /> },
  { icon: <BraveIcon />, dot: true },
  { icon: <PrimeIcon /> },
  { icon: <ChromeIcon /> },
  { icon: <FaWhatsapp size={32} color="#3cd95e" /> },
  { icon: <GreyApp /> },
  { icon: <EdgeIcon />, dot: true },
  { icon: <WbIcon />, dot: true },
  { icon: <MechIcon />, active: true },
];

function Taskbar() {
  return (
    <div className="h-[60px] shrink-0 flex items-center text-white bg-[linear-gradient(180deg,#0a3a6a_0,transparent_9px),radial-gradient(ellipse_70px_34px_at_1490px_60px,#e8a060,transparent),radial-gradient(ellipse_60px_34px_at_450px_60px,#ff8a70,transparent),linear-gradient(90deg,#150f1a_0%,#150f1a_13%,#3c1a1e_15%,#5e1a14_19%,#961a22_24%,#cc3328_26%,#f0553a_28%,#a82c3a_30%,#8a1e4e_33%,#a04a70_36%,#15101f_39%,#15101f_67%,#6a3a58_70%,#8c5a78_71%,#e8c8e0_74%,#c89090_76%,#8a3a60_78%,#620a3c_82%,#7a1044_87%,#b06ca0_89%,#7a0a24_92%,#700818_100%)]">
      <div className="pl-[575px] flex items-center shrink-0">
        {DOCK.map((d, i) => (
          <div key={i} className={`relative w-[55px] h-[52px] flex items-center justify-center ${d.active ? 'rounded-[4px] bg-white/10 border border-white/10' : ''}`}>
            {d.icon}
            {d.dot && <span className="absolute bottom-[1px] w-[6px] h-[3px] rounded-full bg-[#999]" />}
            {d.active && <span className="absolute bottom-[1px] w-[18px] h-[3px] rounded-full bg-[#f28066]" />}
          </div>
        ))}
      </div>
      <ChevronUp size={22} color="#fff" strokeWidth={1.2} className="ml-[178px] shrink-0" />
      <span className="ml-[9px] w-[36px] text-[14px] font-semibold shrink-0">100</span>
      <Keyboard size={22} color="#fff" strokeWidth={1.2} className="shrink-0" />
      <div className="ml-[13px] w-[48px] flex flex-col items-center text-[14px] leading-[20px] shrink-0">
        <span>ENG</span><span>IN</span>
      </div>
      <Wifi size={20} color="#fff" className="ml-[11px] shrink-0" />
      <Volume2 size={20} color="#fff" strokeWidth={1.5} className="ml-[8px] shrink-0" />
      <svg width="20" height="16" viewBox="0 0 20 16" className="ml-[11px] shrink-0" fill="none" stroke="#fff" strokeWidth="1.6">
        <rect x="5" y="3" width="13" height="11" rx="1" fill="#fff" fillOpacity="0.8" />
        <path d="M1 1l3 3M3 1v4" />
      </svg>
      <div className="ml-[4px] w-[95px] flex flex-col items-end text-[14px] leading-[19px] shrink-0">
        <span>00:43</span><span>02-07-2022</span>
      </div>
      <span className="ml-[15px] w-[20px] h-[20px] rounded-full bg-[#ef7c60] text-black text-[13px] flex items-center justify-center shrink-0">2</span>
    </div>
  );
}

export default function App() {
  return (
    <div className="w-[1920px] h-[1080px] overflow-hidden flex flex-col bg-[#eeeef2] text-[#444] text-[13.5px] font-['Noto_Sans',sans-serif]">
      {/* title bar */}
      <div className="h-[32px] flex items-center shrink-0">
        <span className="ml-[10px] w-[21px] h-[21px] bg-black flex items-center justify-center shrink-0">
          <FaCogs size={18} color="#f0a818" />
        </span>
        <span className="ml-[8px] w-px h-[24px] bg-[#d0d0d4] shrink-0" />
        <Save size={21} color="#5a8fe0" strokeWidth={1.5} className="ml-[7px] shrink-0" />
        <span className="ml-[5px] mb-[6px] flex shrink-0"><Caret dark /></span>
        <div className="ml-[72px] w-[69px] h-[32px] bg-[#d8e2f4] border-t-4 border-[#2f5ba0] text-[#5878c8] flex items-center justify-center shrink-0">Context</div>
        <span className="ml-[550px] w-[378px] pt-[2px] text-[13.8px] text-[#666] whitespace-nowrap shrink-0">A : Fluid Flow (Fluent) - Meshing [CFD PrepPost - CFD Base]</span>
        <div className="ml-auto flex items-center">
          <span className="w-[43px] flex justify-center"><Minus size={16} color="#111" strokeWidth={2.6} /></span>
          <span className="w-[43px] flex justify-center">
            <svg width="14" height="14" viewBox="0 0 14 14" fill="none" stroke="#111" strokeWidth="1.6"><rect x="1" y="4" width="9" height="9" /><path d="M4 4V1h9v9h-3" /></svg>
          </span>
          <span className="w-[43px] flex justify-center"><X size={20} color="#111" strokeWidth={2.4} /></span>
        </div>
      </div>

      {/* tabs */}
      <div className="h-[30px] flex items-end shrink-0 border-b-2 border-[#d6d6da] relative">
        <div className="w-[70px] h-[29px] bg-[#0072c6] text-white flex items-center justify-center pt-[4px]">File</div>
        <div className="ml-[10px] w-[70px] h-[30px] bg-[#fafafa] border-x border-t border-[#d6d6da] -mb-[2px] flex items-center justify-center text-[#333] pt-[3px]">Home</div>
        <div className="ml-[9px] w-[58px] h-[29px] flex items-center justify-center pt-[6px]">Mesh</div>
        <div className="ml-[20px] w-[58px] h-[29px] flex items-center justify-center pt-[6px]">Display</div>
        <div className="ml-[27px] w-[64px] h-[29px] flex items-center justify-center pt-[6px]">Selection</div>
        <div className="ml-[32px] w-[80px] h-[29px] flex items-center justify-center pt-[6px]">Automation</div>
        <div className="ml-auto mr-[88px] w-[199px] h-[26px] bg-white border-2 border-[#dcdce4] text-[#aaa] pl-[3px] leading-[22px]">Quick Launch</div>
        <span className="absolute right-[64px] top-[6px]"><ChevronUp size={22} color="#d8a020" strokeWidth={2.4} /></span>
        <span className="absolute right-[40px] top-[7px]">
          <svg width="18" height="18" viewBox="0 0 18 18" fill="none"><path d="M2 4l12-3 3 12-12 3z" stroke="#666" fill="#fff" /><path d="M6 9l2 3 5-7" stroke="#d8a020" strokeWidth="1.5" /></svg>
        </span>
        <span className="absolute right-[14px] top-[7px] w-[17px] h-[17px] rounded-full bg-[#4a90ea] text-white font-bold text-[13px] leading-[17px] text-center">?</span>
        <span className="absolute right-[5px] top-[12px] flex"><Caret dark /></span>
      </div>

      {/* ribbon */}
      <div className="h-[108px] flex shrink-0 bg-[#fafafa]">
        <RibbonGroup label="Outline" width="w-[219px]">
          <LargeItem className="w-[84px]" dim caret icon={<DuplicateIcon />} lines={['Duplicate']} />
          <SmallCol className="w-[61px]">
            <SmallItem dim icon={<Scissors size={16} color="#aaa" />} label="Cut" />
            <SmallItem dim icon={<Copy size={16} color="#aaa" />} label="Copy" />
            <SmallItem dim icon={<ClipboardList size={16} color="#aaa" />} label="Paste" />
          </SmallCol>
          <SmallCol className="w-[72px]">
            <SmallItem dim icon={<X size={16} color="#999" />} label="Delete" textGap="ml-[2px]" />
            <SmallItem icon={<Search size={17} color="#333" strokeWidth={2.4} />} label="Find" textGap="ml-[2px]" />
            <SmallItem icon={<TreeIcon />} label="Tree" caret textGap="ml-[2px]" />
          </SmallCol>
        </RibbonGroup>
        <RibbonGroup label="Mesh" width="w-[79px]">
          <LargeItem className="w-[79px]" icon={<BoltIcon />} lines={['Generate']} />
        </RibbonGroup>
        <RibbonGroup label="Insert" width="w-[280px]">
          <SmallCol className="ml-[14px] w-[150px]">
            <SmallItem dim icon={<NamedSelIcon />} label="Named Selection" textGap="ml-[2px]" />
            <SmallItem dim icon={<CoordSysDim />} label="Coordinate System" textGap="ml-[2px]" />
            <SmallItem icon={<MessageSquare size={17} color="#555" />} label="Comment" textGap="ml-[2px]" />
          </SmallCol>
          <SmallCol className="w-[115px]">
            <SmallItem icon={<Camera size={18} color="#444" />} label="Images" caret />
            <SmallItem icon={<SectionIcon />} label="Section Plane" />
            <SmallItem icon={<AnnotationIcon />} label="Annotation" />
          </SmallCol>
        </RibbonGroup>
        <RibbonGroup label="Tools" width="w-[644px]">
          <LargeItem className="w-[68px]" caret icon={<UnitsIcon />} lines={['Units']} />
          <LargeItem className="w-[60px]" icon={<WorksheetIcon />} lines={['Worksheet']} />
          <LargeItem className="w-[86px]" icon={<KeyframeIcon />} lines={['Keyframe', 'Animation']} />
          <SmallCol className="w-[125px]">
            <SmallItem icon={<Tag size={16} color="#555" />} label="Tags" />
            <SmallItem icon={<ErrorsIcon />} label="Show Errors" />
            <SmallItem icon={<ViewsIcon />} label="Manage Views" />
          </SmallCol>
          <SmallCol className="w-[170px]">
            <SmallItem icon={<InfoIcon />} label="Selection Information" textGap="ml-[2px]" />
            <SmallItem icon={<MiniUnits />} label="Unit Converter" textGap="ml-[2px]" />
            <SmallItem icon={<PrintIcon />} label="Print Preview" textGap="ml-[2px]" />
          </SmallCol>
          <SmallCol className="">
            <SmallItem icon={<ReportIcon />} label="Report Preview" />
            <SmallItem icon={<KeyAssignIcon />} label="Key Assignments" />
          </SmallCol>
        </RibbonGroup>
        <RibbonGroup label="Layout" width="w-[195px]">
          <LargeItem className="w-[66px]" icon={<FullScreenIcon />} lines={['Full', 'Screen']} />
          <SmallCol className="">
            <SmallItem icon={<ManageIcon />} label="Manage" caret textGap="ml-[2px]" />
            <SmallItem icon={<LayoutIcon />} label="User Defined" caret textGap="ml-[2px]" />
            <SmallItem icon={<RotateCw size={17} color="#444" className="-scale-x-100" />} label="Reset Layout" textGap="ml-[2px]" />
          </SmallCol>
        </RibbonGroup>
      </div>

      {/* main */}
      <div className="flex-1 flex min-h-0 border-t border-[#d4d4d8]">
        {/* left column */}
        <div className="w-[435px] shrink-0 flex flex-col">
          <div className="h-[25px] flex items-center pl-[6px] pr-[11px] shrink-0">
            <span>Outline</span>
            <Grip className="ml-[6px] flex-1" />
            <PanelButtons />
          </div>
          <div className="h-[32px] flex items-center shrink-0">
            <div className="ml-[12px] w-[7px] h-[20px] bg-[radial-gradient(#bcbcc0_1px,transparent_1.1px)] bg-[length:3px_3px]" />
            <div className="ml-[9px] w-[122px] h-[27px] bg-white border border-[#d8d8dc] flex items-center justify-between pl-[2px] pr-[5px] text-[#333]">
              Name
              <Caret />
            </div>
            <div className="ml-[2px] w-[112px] h-[27px] bg-white border border-[#d8d8dc] flex items-center pl-[4px] text-[#aaa] whitespace-nowrap">Search Outline</div>
            <svg className="ml-[9px]" width="16" height="12" viewBox="0 0 16 12" fill="none" stroke="#d8a020" strokeWidth="2">
              <path d="M2 3l6 5 6-5" />
            </svg>
            <span className="ml-[5px] mt-[8px] flex"><Caret dark /></span>
          </div>
          <div className="h-[432px] w-[430px] bg-white shrink-0 text-[#444] pt-[2px] overflow-hidden">
            <div className="relative h-5 flex items-center pl-[12px]">
              <span className="w-[18px] shrink-0"><ModelBook /></span>
              <span className="ml-[6px] font-bold text-black text-[14px]">Project*</span>
            </div>
            <TreeRow row={{ label: 'Model (A3)', level: 0, box: 'open', icon: <Folder kind="cube" />, bold: true, guides: [[15, 0]] }} />
            {TREE.map((row) => <TreeRow key={row.label} row={row} />)}
          </div>
          <div className="h-[7px] shrink-0" />
          <div className="h-[26px] flex items-center pl-[6px] pr-[11px] shrink-0">
            <span className="whitespace-nowrap">Details of "Mesh"</span>
            <Grip className="ml-[6px] flex-1" />
            <PanelButtons />
          </div>
          <div className="relative w-[430px] flex-1 min-h-0 bg-white overflow-hidden flex flex-col text-[#444]">
            {DETAILS.map((row) => <DetailRow key={row.section || row.a} row={row} />)}
            <span className="absolute left-[419px] top-[20px] w-[2px] h-[225px] bg-[#8c8c8c]" />
          </div>
        </div>

        {/* right column */}
        <div className="flex-1 min-w-0 flex flex-col">
          <GraphicsToolbar />
          <Viewport />
          <div className="h-[5px] shrink-0" />
          <div className="h-[25px] flex items-center pl-[6px] pr-[7px] shrink-0 border-t border-[#dcdce4]">
            <span className="text-[#555]">Messages</span>
            <Grip className="ml-[6px] flex-1" />
            <PanelButtons square={false} />
          </div>
          <div className="flex-1 min-h-0 bg-[#a0a0a0] text-[13.5px]">
            <div className="w-[1299px] h-[18px] flex bg-[#f0f0f0] text-[#333] leading-[18px] border-b border-[#999]">
              <span className="w-[62px] border-r-2 border-[#a0a0a0]" />
              <span className="w-[581px] pl-[4px] border-r-2 border-[#a0a0a0]">Text</span>
              <span className="w-[382px] pl-[4px] border-r-2 border-[#a0a0a0]">Association</span>
              <span className="flex-1 pl-[4px]">Timestamp</span>
            </div>
            <div className="w-[1299px] h-[19px] flex bg-white text-[#333] leading-[19px] overflow-hidden whitespace-nowrap">
              <span className="w-[62px] pl-[3px] border-r-2 border-[#a0a0a0] overflow-hidden">Warning</span>
              <span className="w-[581px] pl-[4px] border-r-2 border-[#d0d0d0] overflow-hidden [word-spacing:0.8px]">Pre-inflation layer generation has stopped because of side face limitation, proximity collis</span>
              <span className="w-[382px] pl-[4px] border-r-2 border-[#d0d0d0] overflow-hidden">Project&gt;Model&gt;Geometry&gt;Interior</span>
              <span className="flex-1 pl-[4px]">Saturday, July 2, 2022 12:41:53 AM</span>
            </div>
          </div>
        </div>
      </div>

      {/* status bar */}
      <div className="h-[25px] shrink-0 flex items-center bg-[#0072c6] text-[#dce8f6] text-[14px] pl-[10px] whitespace-nowrap">
        <span>Ready</span>
        <svg className="ml-[1240px] shrink-0" width="20" height="20" viewBox="0 0 20 20">
          <path d="M1 7h15v9H7l-3 3v-3H1z" fill="#e8c060" />
          <circle cx="12" cy="6" r="5.500" fill="#2040b0" />
          <text x="12" y="9.500" fontSize="9" fontWeight="bold" textAnchor="middle" fill="#fff" fontFamily="Liberation Sans">i</text>
        </svg>
        <span className="ml-[1px] w-[90px] shrink-0">1 Message</span>
        <span className="w-[113px] shrink-0">No Selection</span>
        <span className="w-[13px] h-0 border-x-[6px] border-x-transparent border-b-[6px] border-b-white shrink-0" />
        <span className="ml-[3px] w-[217px] shrink-0 [word-spacing:1px]">Metric (mm, kg, N, s, mV, mA)</span>
        <span className="w-[68px] shrink-0">Degrees</span>
        <span className="w-[48px] shrink-0">rad/s</span>
        <span>Celsius</span>
      </div>

      <Taskbar />
    </div>
  );
}
